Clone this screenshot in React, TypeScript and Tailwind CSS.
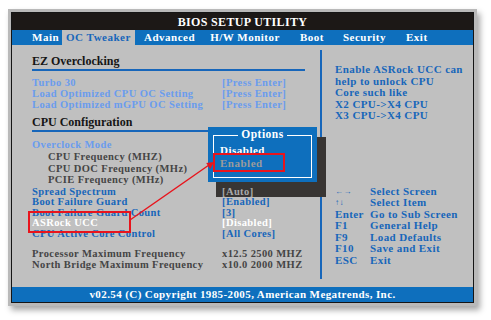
import React from "react";

type Row = { label: string; value?: string; tone: "light" | "blue" | "grey" | "white"; indent?: boolean; valueTone?: string; h?: string };

const toneClass = {
  light: "text-[#6a9cee]",
  blue: "text-[#1766ba]",
  grey: "text-[#454545]",
  white: "text-white",
};

const ezRows: Row[] = [
  { label: "Turbo 30", value: "[Press Enter]", tone: "light" },
  { label: "Load Optimized CPU OC Setting", value: "[Press Enter]", tone: "light" },
  { label: "Load Optimized mGPU OC Setting", value: "[Press Enter]", tone: "light" },
];

const cpuRows: Row[] = [
  { label: "Overclock Mode", tone: "light", h: "h-[11.8px]" },
  { label: "CPU Frequency (MHZ)", tone: "grey", indent: true, h: "h-[11.8px]" },
  { label: "CPU DOC Frequency (MHz)", tone: "grey", indent: true, h: "h-[11.8px]" },
  { label: "PCIE Frequency (MHz)", tone: "grey", indent: true, h: "h-[11.8px]" },
  { label: "Spread Spectrum", value: "[Auto]", tone: "blue", valueTone: "relative z-20 text-[#a9a9a9]" },
  { label: "Boot Failure Guard", value: "[Enabled]", tone: "blue" },
  { label: "Boot Failure Guard Count", value: "[3]", tone: "blue" },
  { label: "ASRock UCC", value: "[Disabled]", tone: "white" },
  { label: "CPU Active Core Control", value: "[All Cores]", tone: "blue" },
];

const keys = [
  ["←→", "Select Screen"],
  ["↑↓", "Select Item"],
  ["Enter", "Go to Sub Screen"],
  ["F1", "General Help"],
  ["F9", "Load Defaults"],
  ["F10", "Save and Exit"],
  ["ESC", "Exit"],
];

function ItemRow({ row, h }: { row: Row; h: string }) {
  return (
    <div className={`flex items-center ${row.h ?? h} text-[10.5px] tracking-[0.4px] whitespace-nowrap`}>
      <div className={`w-[190px] ${row.indent ? "pl-[16px]" : ""} ${toneClass[row.tone]}`}>{row.label}</div>
      {row.value && <div className={row.valueTone ?? toneClass[row.tone]}>{row.value}</div>}
    </div>
  );
}

function Heading({ text }: { text: string }) {
  return (
    <div className="mr-[15px] border-b-2 border-[#1766ba] pb-[1px]">
      <div className="text-[12px] leading-[14px] text-[#151515]">{text}</div>
    </div>
  );
}

export default function App() {
  return (
    <div className="relative w-[491px] h-[320px] bg-white pl-[8px] pt-[9px] font-['Liberation_Serif','Times_New_Roman',serif] font-bold">
      <div className="w-[469px] h-[297px] bg-[#b9b9b9] p-[3px] shadow-[3px_4px_6px_rgba(0,0,0,0.35)]">
        <div className="h-full border border-[#151515] flex flex-col bg-[#c0c0c0]">
          {/* title */}
          <div className="h-[17px] bg-[#1c1816] flex items-center justify-center text-white text-[12px] tracking-[0.35px]">
            BIOS SETUP UTILITY
          </div>
          {/* tabs */}
          <div className="h-[15px] bg-[#0e6fbd] flex items-stretch text-[11px] tracking-[0.5px] text-white whitespace-nowrap">
            <div className="ml-[20px] flex items-center">Main</div>
            <div className="ml-[3px] w-[73px] pl-[4px] bg-[#c0c0c0] text-[#1766ba] flex items-center">OC Tweaker</div>
            <div className="ml-[9px] flex items-center">Advanced</div>
            <div className="ml-[15px] flex items-center">H/W Monitor</div>
            <div className="ml-[20px] flex items-center">Boot</div>
            <div className="ml-[19px] flex items-center">Security</div>
            <div className="ml-[20px] flex items-center">Exit</div>
          </div>
          {/* content */}
          <div className="relative flex-1 flex">
            <div className="w-[308px] pl-[20px] pt-[9px]">
              <Heading text="EZ Overclocking" />
              <div className="pt-[6px]">
                {ezRows.map((r) => (
                  <ItemRow key={r.label} row={r} h="h-[11px]" />
                ))}
              </div>
              <div className="pt-[5px]">
                <Heading text="CPU Configuration" />
              </div>
              <div className="pt-[7px]">
                {cpuRows.map((r) => (
                  <ItemRow key={r.label} row={r} h="h-[10.5px]" />
                ))}
              </div>
              <div className="pt-[10px]">
                <ItemRow row={{ label: "Processor Maximum Frequency", value: "x12.5 2500 MHZ", tone: "grey" }} h="h-[10.5px]" />
                <ItemRow row={{ label: "North Bridge Maximum Frequency", value: "x10.0 2000 MHZ", tone: "grey" }} h="h-[10.5px]" />
              </div>
            </div>
            <div className="flex-1 mt-[5px] mb-[8px] border-l-2 border-[#1766ba] pl-[13px] pt-[14px] flex flex-col text-[11px] tracking-[0.4px] text-[#1766ba] whitespace-nowrap">
              <div className="leading-[11.5px]">
                <div>Enable ASRock UCC can</div>
                <div>help to unlock CPU</div>
                <div>Core such like</div>
                <div>X2 CPU-&gt;X4 CPU</div>
                <div>X3 CPU-&gt;X4 CPU</div>
              </div>
              <div className="mt-[64px] leading-[11.5px]">
                {keys.map(([k, d]) => (
                  <div key={k} className="flex">
                    <div className={`w-[35px] ${k.length === 2 && !k.startsWith("F") ? "text-[8px] font-normal" : ""}`}>{k}</div>
                    <div>{d}</div>
                  </div>
                ))}
              </div>
            </div>

            {/* popup shadow */}
            <div className="absolute left-[204px] top-[92px] w-[110px] h-[60px] bg-[#383533] z-10" />
            {/* popup */}
            <div className="absolute left-[196px] top-[82px] w-[109px] h-[55px] bg-[#0e6fbd] px-[5px] pt-[8px] pb-[4px] z-30">
              <div className="relative h-full border border-white pl-[6px] pt-[8px] text-[11px] tracking-[0.5px] leading-[13px]">
                <div className="absolute -top-[8px] left-0 right-0 flex justify-center">
                  <span className="bg-[#0e6fbd] px-[3px] text-white text-[11.5px]">Options</span>
                </div>
                <div className="text-white">Disabled</div>
                <div className="text-[#9b9b9b]">Enabled</div>
              </div>
            </div>
          </div>
          {/* footer */}
          <div className="h-[15px] bg-[#0e6fbd] flex items-center justify-center text-white text-[11px] tracking-[0.4px] whitespace-nowrap">
            v02.54 (C) Copyright 1985-2005, American Megatrends, Inc.
          </div>
        </div>
      </div>

      {/* red annotation */}
      <svg className="absolute inset-0 z-40 pointer-events-none" width="491" height="320" viewBox="0 0 491 320">
        <rect x="29" y="212" width="101" height="20" fill="none" stroke="#e8141c" strokeWidth="2" />
        <rect x="214" y="154" width="70" height="17" fill="none" stroke="#e8141c" strokeWidth="2" />
        <line x1="130" y1="220" x2="209" y2="165" stroke="#e8141c" strokeWidth="1.5" />
        <polygon points="214,162 210.2,168.9 206.2,163.1" fill="#e8141c" />
      </svg>
    </div>
  );
}
